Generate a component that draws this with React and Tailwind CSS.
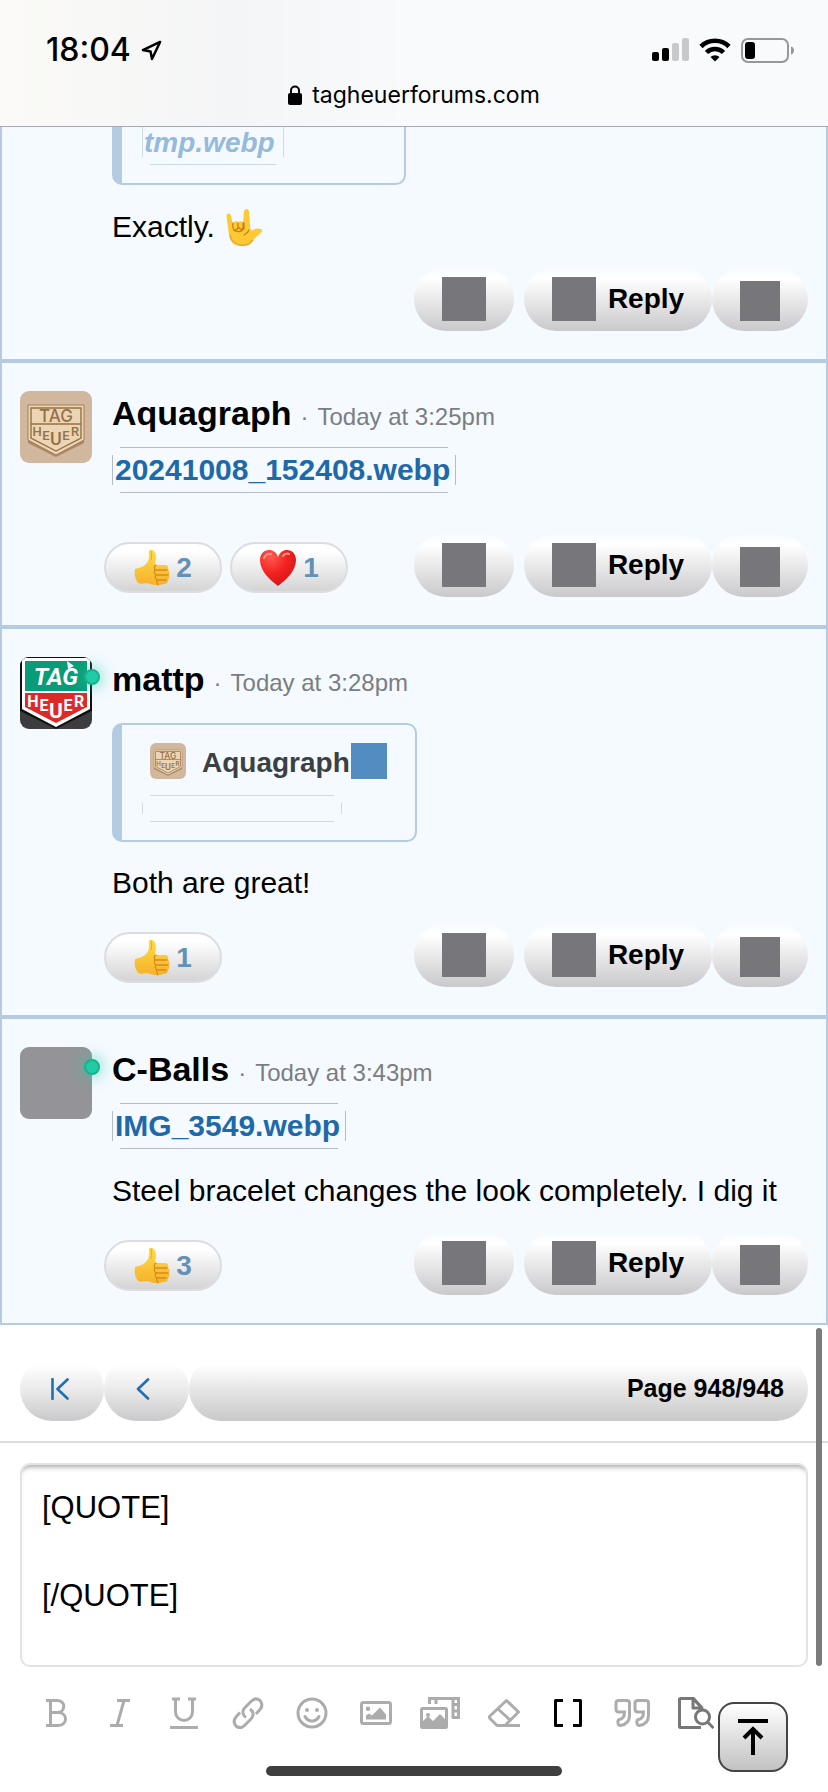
function Thumb() {
  return (
    <svg viewBox="0 0 36 38" className="h-[38px] w-9 shrink-0" aria-hidden="true">
      <defs>
        <linearGradient id="thumb" x1="0" y1="0" x2="0" y2="1">
          <stop offset="0" stopColor="#ffdc45" />
          <stop offset="1" stopColor="#f5b22c" />
        </linearGradient>
      </defs>
      <path
        d="M1 20c4-1 8-2 11-5 2-2 3-5 3-8 0-3-1-5 1-6 3-1 6 2 6 7 0 3-1 5-1 8h10c3 0 4 3 3 5 2 1 2 4 1 5 1 2 0 4-1 5 0 3-2 4-4 4-6 2-12 1-17-1-4 1-7 1-9 0-3-4-4-9-3-14z"
        fill="url(#thumb)"
      />
      <path
        d="M22 16c-2 1-2 3-1 5h12M21 21c-1 1-1 4 1 5h12M22 26c-1 1-1 4 1 5h9M23 31c-1 1 0 3 1 5"
        fill="none" stroke="#d98a1c" strokeWidth="1.3" strokeLinecap="round"
      />
      <path d="M17 2c1 2 1 6 0 9" fill="none" stroke="#e9a52b" strokeWidth="1" strokeLinecap="round" />
    </svg>
  )
}

function Heart() {
  return (
    <svg viewBox="0 0 38 38" className="size-[38px] shrink-0" aria-hidden="true">
      <defs>
        <radialGradient id="heart" cx="0.3" cy="0.2" r="0.9">
          <stop offset="0" stopColor="#ff5a50" />
          <stop offset="0.5" stopColor="#f3221f" />
          <stop offset="1" stopColor="#c9151c" />
        </radialGradient>
      </defs>
      <path d="M19 37C11 31 1 22 1 11 1 5 5 1 10 1c4 0 7 2 9 7 2-5 5-7 9-7 5 0 9 4 9 10 0 11-10 20-18 26z" fill="url(#heart)" />
      <path d="M5 9c1-3 4-5 7-4M24 7c1-2 4-3 6-2" fill="none" stroke="#ff9a92" strokeWidth="2" strokeLinecap="round" />
    </svg>
  )
}

function LoveYouHand() {
  return (
    <svg viewBox="0 0 38 38" className="size-[38px] shrink-0" aria-label="love-you gesture" role="img">
      <path
        d="M1.500 8.500c-.5-3.500 4-4 4.500-.5L7.500 15c3-2 4-2 5.500-1 1.500-1 3-1 5 0l1-10.500c.3-3.500 5-3.500 5 0L25 17c.3 4 1 6 2.500 5.500C30 20 33 20 36 21c1.500.5 1.500 2 .5 3L27 33c-3 3.500-6 5-11 5-7 0-11-4-12-11z"
        fill="#ffc933"
      />
      <path
        d="M8 15c-1 3 0 7 2 7s3-1 3-3v-4M13.500 19c1 3 4.500 3 4.500 0v-4M9 22.500c4 2 7 1.500 10-1.500V15M24 22c-1 3-3 4-5 5"
        fill="none" stroke="#c9821a" strokeWidth="1.300" strokeLinecap="round"
      />
      <path d="M5 27c1 6 5 9 10 10 6 1 10-1 13-5" fill="none" stroke="#eba42c" strokeWidth="1.400" />
    </svg>
  )
}

function BeigeLogo({ className }) {
  return (
    <svg viewBox="0 0 72 72" className={className} role="img" aria-label="Aquagraph avatar">
      <rect width="72" height="72" fill="#d2b79f" />
      <path d="M8 15h56v37L36 66 8 52z" fill="#a98664" />
      <path d="M8 14h56v35L36 64 8 49z" fill="#ecd5b3" stroke="#a67f56" strokeWidth="1" />
      <path d="M11 17h50v30L36 60 11 47zM11 33h50" fill="none" stroke="#94704a" strokeWidth="1.4" />
      <g fill="#957048" fontFamily="Roboto, sans-serif" fontWeight="500" textAnchor="middle">
        <text x="36" y="31" fontSize="17" fontFamily="Inter, sans-serif">TAG</text>
        <g fontSize="13">
          <text x="17" y="45">H</text>
          <text x="26" y="49">E</text>
          <text x="36" y="54" fontSize="18">U</text>
          <text x="46" y="49">E</text>
          <text x="55" y="45">R</text>
        </g>
      </g>
    </svg>
  )
}

function ColorLogo({ className }) {
  return (
    <svg viewBox="0 0 72 72" className={className} role="img" aria-label="mattp avatar">
      <rect width="72" height="72" fill="#3c3d3f" />
      <path d="M0 0h72v54L36 72 0 54z" fill="#111" />
      <path d="M2 1h68v51L36 70 2 52z" fill="#fff" />
      <path d="M5 4h62v30H5z" fill="#0a9b78" />
      <path d="M5 36h62v14L36 66 5 50z" fill="#dc2b27" />
      <g fill="#fff" fontFamily="Roboto, sans-serif" fontWeight="700" textAnchor="middle">
        <text x="36" y="28" fontSize="24" fontStyle="italic">TAG</text>
        <path d="M47 4l7 5-6 3z" />
        <g fontSize="16">
          <text x="13" y="50">H</text>
          <text x="24" y="54">E</text>
          <text x="36" y="61" fontSize="21">U</text>
          <text x="48" y="54">E</text>
          <text x="59" y="50">R</text>
        </g>
      </g>
    </svg>
  )
}

function Avatar({ kind, online }) {
  return (
    <div className="relative size-[72px] shrink-0">
      {kind === 'beige' && <BeigeLogo className="size-full rounded-[9px]" />}
      {kind === 'color' && <ColorLogo className="size-full rounded-[9px]" />}
      {kind === 'blank' && <div className="size-full rounded-[9px] bg-[#949498]" />}
      {online && (
        <span className="absolute top-3 -right-2 size-4 rounded-full border-2 border-[#15b28c] bg-[#20cba5] shadow-[0_0_14px_3px_rgba(32,203,165,0.45)]" />
      )}
    </div>
  )
}

// Frame whose four edges stop short of the corners
function Frame({ faint, className, children }) {
  const line = faint ? 'bg-[#cddbe8]' : 'bg-[#b3bcc8]'
  return (
    <div className={`relative ${className}`}>
      <span className={`absolute inset-x-2 top-0 h-px ${line}`} />
      <span className={`absolute inset-x-2 bottom-0 h-px ${line}`} />
      <span className={`absolute inset-y-2 left-0 w-px ${line}`} />
      <span className={`absolute inset-y-2 right-0 w-px ${line}`} />
      {children}
    </div>
  )
}

function FileLink({ name, className = '' }) {
  return (
    <Frame className={`mt-3 h-[46px] w-fit pr-1.5 pl-[3px] ${className}`}>
      <a href="#file" className="text-[30px] leading-[45px] font-bold text-[#1d69aa]">{name}</a>
    </Frame>
  )
}

const pill = 'flex h-16 items-center justify-center rounded-[32px] bg-linear-to-b to-[#c9c9cb]'
const softPill = `${pill} from-white/10 from-0% via-white via-18%`

function Reaction({ type, count }) {
  return (
    <button className="flex h-[51px] w-[118px] items-center justify-center gap-1.5 rounded-full border-2 border-[#dcdddf] bg-linear-to-b from-white from-15% to-[#d4d4d5] text-[28px] font-bold text-[#6391b7]">
      {type === 'like' ? <Thumb /> : <Heart />}
      {count}
    </button>
  )
}

function PostFooter({ reactions = [] }) {
  return (
    <footer className="mt-[18px] flex items-end justify-between pl-[84px]">
      <div className="mb-1 flex gap-2">
        {reactions.map(r => <Reaction key={r.type} {...r} />)}
      </div>
      <div className="flex">
        <button aria-label="React" className={`${softPill} mr-2.5 w-[100px]`}>
          <span className="size-11 bg-[#77767a]" />
        </button>
        <button className={`${softPill} w-[188px] gap-3 text-[28px] font-bold`}>
          <span className="size-11 bg-[#77767a]" />
          Reply
        </button>
        <button aria-label="More" className={`${softPill} w-24 pt-1`}>
          <span className="size-10 bg-[#77767a]" />
        </button>
      </div>
    </footer>
  )
}

function Post({ name, time, avatar, online, reactions, children }) {
  return (
    <article className="border-2 border-[#b3cce2] bg-[#f4faff] px-[18px] py-7">
      <div className="flex gap-5">
        <Avatar kind={avatar} online={online} />
        <div className="min-w-0 flex-1">
          <header className="flex h-11 items-baseline text-[24px] leading-[44px] text-[#7b7d82]">
            <h2 className="text-[34px] font-bold text-black">{name}</h2>
            <span className="px-[9px]">·</span>
            <time>{time}</time>
          </header>
          {children}
        </div>
      </div>
      <PostFooter reactions={reactions} />
    </article>
  )
}

function StatusBar() {
  return (
    <div className="flex items-center justify-between pt-7 pr-[33px] pl-[46px]">
      <div className="flex items-center gap-2.5 font-['Inter',sans-serif] text-[32px] leading-[44px] font-medium">
        18:04
        <svg viewBox="0 0 22 22" className="size-[21px]" fill="none" stroke="#000" strokeWidth="2.6" strokeLinejoin="round" aria-hidden="true">
          <path d="M20 2L2 10.500l8 1.500 1.500 8z" />
        </svg>
      </div>
      <div className="flex items-center gap-2.5">
        <svg viewBox="0 0 37 24" className="h-6 w-[37px]" aria-hidden="true">
          <rect x="0" y="14" width="7" height="9" rx="2" />
          <rect x="10" y="10" width="7" height="13" rx="2" />
          <rect x="20" y="5" width="7" height="18" rx="2" fill="#c8c9ca" />
          <rect x="30" y="0" width="7" height="23" rx="2" fill="#c8c9ca" />
        </svg>
        <svg viewBox="0 0 32 24" className="h-6 w-8" fill="none" stroke="#000" strokeWidth="4.6" aria-hidden="true">
          <path d="M2 8.500a20 20 0 0 1 28 0M7.500 14.500a12 12 0 0 1 17 0" />
          <path d="M11.500 19a6.500 6.500 0 0 1 9 0L16 23.500z" fill="#000" stroke="none" />
        </svg>
        <svg viewBox="0 0 54 25" className="h-[25px] w-[54px]" aria-hidden="true">
          <rect x="1" y="1" width="46" height="23" rx="6" fill="none" stroke="#96979b" strokeWidth="2" />
          <rect x="4" y="4" width="10" height="17" rx="3" />
          <path d="M50 8.500c4 1 4 7 0 8z" fill="#96979b" />
        </svg>
      </div>
    </div>
  )
}

const tools = [
  { label: 'Bold', w: 24, d: <path d="M2 3.500h11c9 0 9 12 0 12H7M2 28.500h12c10 0 10-13 0-13M6.500 3.500v25M2 3.500h5M2 28.500h5" /> },
  { label: 'Italic', w: 22, d: <path d="M8 3.500h13M1 28.500h13M15 3.500l-7 25" /> },
  { label: 'Underline', w: 28, d: <path d="M2 2h8M18 2h8M5.500 2v13a8.500 8.500 0 0 0 17 0V2M0 30.500h28" /> },
  {
    label: 'Link',
    w: 32,
    d: (
      <>
        <path d="M14 20.500c-4-3-4-7-1-10l6.500-6.500c3-3 6-2.500 8.500-.5 2.500 3 2.500 6 0 9L24 17" />
        <path d="M18 12c4 3 4 7 1 10l-6.500 6.500c-3 3-6 2.500-8.500.5-2.500-3-2.500-6 0-9L8 15.500" />
      </>
    ),
  },
  {
    label: 'Smilies',
    w: 32,
    d: (
      <>
        <circle cx="16" cy="16" r="14" />
        <path d="M9 19.500c3 6 11 6 14 0" strokeLinecap="round" />
        <circle cx="11" cy="13" r="2" fill="currentColor" stroke="none" />
        <circle cx="21" cy="13" r="2" fill="currentColor" stroke="none" />
      </>
    ),
  },
  {
    label: 'Image',
    w: 32,
    d: (
      <>
        <rect x="1.500" y="5.500" width="29" height="21" rx="2" />
        <path d="M6 22.500v-4l3-2 3 2 8-8 6 7v5zM8 9.500a2 2 0 1 1 0 4.500 2 2 0 0 1 0-4.500z" fill="currentColor" stroke="none" />
      </>
    ),
  },
  {
    label: 'Media',
    w: 40,
    d: (
      <>
        <path d="M9.500 7V1.500h29v19H32M33 1v20M33 7.500h5M33 14h5M16 2v5" />
        <rect x="1.500" y="11.500" width="25" height="19" rx="1" />
        <path d="M2 29v-4l6-6 5 5 7-7 7 7v7zM8 16a2 2 0 1 1 0 4 2 2 0 0 1 0-4z" fill="currentColor" stroke="none" />
      </>
    ),
  },
  { label: 'Remove formatting', w: 32, d: <path d="M32 28.500H9L2.500 22c-1.500-1.500-1.500-2 0-3.500L18.500 3.500l12 11.500L17 28.500M9.500 11.500l13 12" strokeLinejoin="round" /> },
  { label: 'Toggle BB code', w: 28, cls: 'text-black', d: <path d="M9 3.500H1.500v25H9M19 3.500h7.500v25H19" strokeLinejoin="round" /> },
  {
    label: 'Quote',
    w: 36,
    d: (
      <>
        <path d="M15.500 15V6c0-2-1-2.500-3-2.500H5c-2 0-3 .5-3 2.500v6c0 2 1 3 3 3h5.500c0 5-2 7-5 7.500-2.500.5-2 6 1 6 6-1 9-4.500 9-10z" />
        <path d="M34.500 15V6c0-2-1-2.500-3-2.500H24c-2 0-3 .5-3 2.500v6c0 2 1 3 3 3h5.500c0 5-2 7-5 7.500-2.500.5-2 6 1 6 6-1 9-4.500 9-10z" />
      </>
    ),
  },
  {
    label: 'Preview',
    w: 36,
    cls: 'text-[#777]',
    d: (
      <>
        <path d="M23 30.500H2.500c-1 0-1 0-1-1v-27c0-1 0-1 1-1H15l8 8.500" strokeLinejoin="round" />
        <path d="M15 1v10h9z" strokeLinejoin="round" />
        <circle cx="24.500" cy="20" r="7" />
        <path d="M29.500 25l6 6" />
      </>
    ),
  },
]

function Toolbar() {
  return (
    <div className="flex pt-[30px] pl-1" role="toolbar">
      {tools.map(t => (
        <button key={t.label} aria-label={t.label} className={`flex w-16 shrink-0 justify-center ${t.cls || 'text-[#acacac]'}`}>
          <svg width={t.w} height="32" viewBox={`0 0 ${t.w} 32`} fill="none" stroke="currentColor" strokeWidth="3">
            {t.d}
          </svg>
        </button>
      ))}
    </div>
  )
}

export default function App() {
  return (
    <div className="relative flex min-h-screen flex-col bg-white font-['Liberation_Sans',Arial,sans-serif] text-black">
      <header className="h-[127px] border-b border-[#a4a9b6] bg-[linear-gradient(90deg,#fbfaf7_0%,#f4f5f6_28%,#f8fafb_50%,#f9fafc_100%)]">
        <StatusBar />
        <div className="mt-1 flex items-center justify-center gap-2.5 font-['Inter',sans-serif] text-[23px] leading-[38px]">
          <svg viewBox="0 0 14 20" className="h-5 w-3.5" aria-hidden="true">
            <rect x="0" y="8" width="14" height="12" rx="2" />
            <path d="M3 9V5.500a4 4 0 0 1 8 0V9" fill="none" stroke="#000" strokeWidth="2" />
          </svg>
          tagheuerforums.com
        </div>
      </header>

      <main>
        <article className="border-2 border-t-0 border-[#b3cce2] bg-[#f4faff] px-[18px] pb-7">
          <div className="pl-[92px]">
            <blockquote className="h-[58px] w-[294px] rounded-b-[10px] border-2 border-t-0 border-l-[10px] border-[#b3cce2] pl-5">
              <div className="relative h-[38px] w-[142px] pl-0.5">
                <span className="absolute top-0 left-0 h-[30px] w-px bg-[#cddbe8]" />
                <span className="absolute top-0 right-0 h-[30px] w-px bg-[#cddbe8]" />
                <span className="absolute inset-x-2 bottom-0 h-px bg-[#cddbe8]" />
                <a href="#file" className="text-[28px] leading-[32px] font-bold text-[#95badb] italic">tmp.webp</a>
              </div>
            </blockquote>
            <p className="mt-[19px] flex items-center gap-2.5 text-[30px] leading-[45px]">
              Exactly. <LoveYouHand />
            </p>
          </div>
          <PostFooter />
        </article>

        <Post
          name="Aquagraph"
          time="Today at 3:25pm"
          avatar="beige"
          reactions={[{ type: 'like', count: 2 }, { type: 'love', count: 1 }]}
        >
          <FileLink name="20241008_152408.webp" className="mb-[22px]" />
        </Post>

        <Post name="mattp" time="Today at 3:28pm" avatar="color" online reactions={[{ type: 'like', count: 1 }]}>
          <blockquote className="mt-[22px] h-[119px] w-[305px] rounded-[10px] border-2 border-l-[10px] border-[#b3cce2] pt-4 pl-5">
            <div className="flex h-10 items-center pl-2 text-[28px] leading-[40px] font-bold text-[#3c4043]">
              <BeigeLogo className="size-9 rounded-md" />
              <span className="pt-1 pl-4">Aquagraph</span>
              <span className="ml-px size-9 bg-[#538cc0]" />
            </div>
            <Frame faint className="mt-3.5 h-[27px] w-[200px]" />
          </blockquote>
          <p className="mt-[18px] text-[30px] leading-[45px]">Both are great!</p>
        </Post>

        <Post name="C-Balls" time="Today at 3:43pm" avatar="blank" online reactions={[{ type: 'like', count: 3 }]}>
          <FileLink name="IMG_3549.webp" />
          <p className="mt-[19px] text-[30px] leading-[45px]">Steel bracelet changes the look completely. I dig it</p>
        </Post>
      </main>

      <nav className="flex border-b-2 border-[#dcdcdc] px-5 pt-8 pb-5">
        <button aria-label="First page" className={`${pill} w-[84px] from-white from-12% via-[#e8e8e8] via-55% pr-1 text-[#216fb3]`}>
          <svg width="18" height="22" viewBox="0 0 18 22" fill="none" stroke="currentColor" strokeWidth="2.600">
            <path d="M1.500 1v20M16.500 1.500L6.500 11l10 9.500" strokeLinecap="round" strokeLinejoin="round" />
          </svg>
        </button>
        <button aria-label="Previous page" className={`${pill} w-[85px] from-white from-12% via-[#e8e8e8] via-55% pr-2 text-[#216fb3]`}>
          <svg width="14" height="22" viewBox="0 0 14 22" fill="none" stroke="currentColor" strokeWidth="2.600">
            <path d="M12 1.500L2 11l10 9.500" strokeLinecap="round" strokeLinejoin="round" />
          </svg>
        </button>
        <button className="flex h-16 flex-1 items-center justify-end rounded-[32px] bg-linear-to-b from-white from-12% via-[#e6e6e6] via-50% to-[#c9c9c9] pr-6 text-[25px] font-bold">
          Page 948/948
        </button>
      </nav>

      <section className="px-5 pt-5">
        <textarea
          aria-label="Reply"
          defaultValue={'[QUOTE]\n\n[/QUOTE]'}
          className="block h-[204px] w-full resize-none rounded-[10px] border-2 border-[#e3e3e3] px-5 py-[21px] text-[31px] leading-[44px] shadow-[inset_0_6px_5px_-4px_rgba(0,0,0,0.35)] outline-none"
        />
        <Toolbar />
      </section>

      <div className="fixed top-[1328px] right-1.5 bottom-[126px] w-1.5 rounded-full bg-[#7b7b7b]" />
      <button
        aria-label="Back to top"
        className="fixed right-10 bottom-5 flex size-[70px] items-center justify-center rounded-[16px] border-2 border-[#444] bg-linear-to-b from-white to-[#c2c2c2]"
      >
        <svg width="30" height="36" viewBox="0 0 30 36" fill="none" stroke="#000" strokeWidth="4" aria-hidden="true">
          <path d="M0 2h30M15 36V11M6 19l9-9 9 9" />
        </svg>
      </button>
      <div className="fixed bottom-4 left-1/2 h-2.5 w-[296px] -translate-x-1/2 rounded-full bg-[#3f3f3f]" />
    </div>
  )
}
